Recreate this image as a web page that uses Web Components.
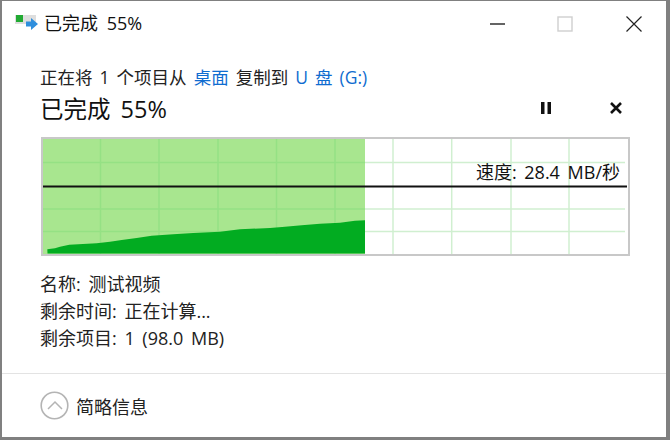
<!DOCTYPE html>
<html><head><meta charset="utf-8"><style>html,body{margin:0;padding:0;background:#fff}</style></head><body>
<copy-dialog></copy-dialog>
<script>
const FONT='"Open Sans","Noto Sans CJK SC",sans-serif';
class TitleBar extends HTMLElement{constructor(){super();this.attachShadow({mode:'open'}).innerHTML=`<style>
:host{display:flex;align-items:center;height:46px;padding:0 24px 0 13px;color:#111;font-size:18px}
svg{display:block;flex:none}
.t{margin:0 0 4px 6px;white-space:nowrap;word-spacing:4px}
.b{margin-left:52px}
.b.first{margin-left:auto}
</style>
<svg width="23" height="18" viewBox="0 0 23 18"><rect x="0" y="0" width="21" height="9" fill="#dedede"/><rect x="1" y="0" width="7" height="7" fill="#22aa33"/><path d="M11 6.500h5V3l7 6-7 6v-3.500h-5z" fill="#2f8fdd"/></svg>
<span class="t">已完成 55%</span>
<svg class="b first" width="16" height="16"><path d="M1 8h15" stroke="#222" stroke-width="1.400"/></svg>
<svg class="b" width="16" height="16"><rect x="1" y="1" width="14" height="14" fill="none" stroke="#cfcfcf" stroke-width="1.400"/></svg>
<svg class="b" width="16" height="16" style="margin-left:53px"><path d="M.5 .5l15 15M15.500 .5l-15 15" stroke="#222" stroke-width="1.200"/></svg>`}}
customElements.define('title-bar',TitleBar);
class SpeedGraph extends HTMLElement{constructor(){super();
const xv=[57.5,116,175,233.5,292,350,408.7,468,526];
const yh=[23.5,70,92.5];
let a='',b='';
for(const y of yh){a+=`<path d="M0 ${y}H582" stroke="#d0efd0" stroke-width="1.500"/>`;b+=`<path d="M0 ${y}H322" stroke="#95e184" stroke-width="1.500"/>`;}
for(const x of xv){a+=`<path d="M${x} 0V115" stroke="#d0efd0" stroke-width="1.500"/>`;if(x<322)b+=`<path d="M${x} 0V115" stroke="#95e184" stroke-width="1.500"/>`;}
const pts=[[52,358],[75,355],[90,350],[118,344],[200,340],[240,335],[275,330],[320,324],[365,317],[430,313],[490,309],[570,305],[630,298],[720,294],[765,290],[815,286],[870,281],[930,278],[975,272],[1005,271]];
let d='M4.500 114.500';
for(const [X,Y] of pts)d+=`L${(X/3-13).toFixed(1)} ${(Y/3-9).toFixed(1)}`;
d+='V114.500Z';
this.attachShadow({mode:'open'}).innerHTML=`<style>
:host{display:block;position:relative;box-sizing:border-box;width:589px;height:119px;border:2px solid #c8c8c8;background:#fff}
svg{display:block}
.s{position:absolute;right:8px;top:21px;font-size:18px;line-height:24px;color:#111;white-space:nowrap;word-spacing:3px}
</style>
<svg width="585" height="115">${a}<rect x="0" y="0" width="322" height="115" fill="#a8e68f"/>${b}
<path d="${d}" fill="#02ac21"/>
<path d="M0 47.500H584" stroke="#111" stroke-width="2"/></svg>
<span class="s">速度: 28.4 MB/秒</span>`}}
customElements.define('speed-graph',SpeedGraph);
class InfoRow extends HTMLElement{constructor(){super();this.attachShadow({mode:'open'}).innerHTML=`<style>:host{display:block;font-size:18px;line-height:27px;color:#222;white-space:nowrap;word-spacing:3px}</style><slot></slot>`}}
customElements.define('info-row',InfoRow);
class MoreToggle extends HTMLElement{constructor(){super();this.attachShadow({mode:'open'}).innerHTML=`<style>
:host{display:flex;align-items:center;gap:7px;flex:1;padding-left:38px;border-top:1px solid #e3e3e3;font-size:18px;color:#222}
svg{display:block}</style>
<svg width="29" height="29" viewBox="0 0 29 29"><circle cx="14.500" cy="14.500" r="13.300" fill="none" stroke="#b4b4b4" stroke-width="1.600"/><path d="M8 18L15 11 22 18" fill="none" stroke="#b4b4b4" stroke-width="1.500"/></svg><span><slot></slot></span>`}}
customElements.define('more-toggle',MoreToggle);
class CopyDialog extends HTMLElement{constructor(){super();this.attachShadow({mode:'open'}).innerHTML=`<style>
:host{display:flex;flex-direction:column;box-sizing:border-box;width:670px;height:440px;background:#fff;border:solid #808080;border-width:1px 4px 3px 2px;font-family:${FONT};overflow:hidden}
.body{padding:18px 0 0 38px}
.l1{font-size:17.500px;line-height:24px;color:#222;white-space:nowrap;word-spacing:2.500px}
.l1 b{font-weight:400;color:#0f6cd0}
.h{display:flex;align-items:center;gap:58px;height:30px;margin:4px 0 14px 0;width:582px;font-size:23.500px;color:#111;word-spacing:4px}
.h .n{flex:1}
svg{display:block}
.rows{margin-top:15px}
speed-graph{margin-left:1px}
more-toggle{margin-top:21px}
</style>
<title-bar></title-bar>
<div class="body">
<div class="l1">正在将 1 个项目从 <b>桌面</b> 复制到 <b>U 盘 (G:)</b></div>
<div class="h"><span class="n">已完成 55%</span>
<svg width="12" height="12"><path d="M1 0h3.500v12H1zM7.500 0H11v12H7.500z" fill="#111"/></svg>
<svg width="12" height="12"><path d="M1 1l10 10M11 1L1 11" stroke="#111" stroke-width="2.600"/></svg></div>
<speed-graph></speed-graph>
<div class="rows">
<info-row>名称: 测试视频</info-row>
<info-row>剩余时间: 正在计算...</info-row>
<info-row>剩余项目: 1 (98.0 MB)</info-row>
</div></div>
<more-toggle>简略信息</more-toggle>`}}
customElements.define('copy-dialog',CopyDialog);
</script></body></html>
